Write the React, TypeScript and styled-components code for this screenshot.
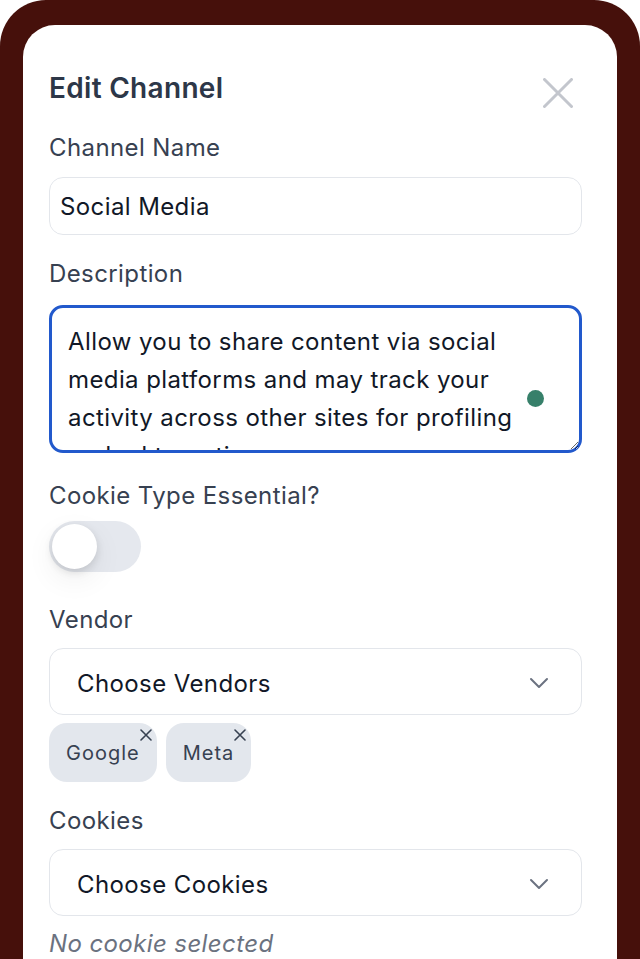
import React from "react";
import styled, { createGlobalStyle } from "styled-components";

const Global = createGlobalStyle`
  html, body { margin: 0; padding: 0; background: #ffffff; }
  body { font-family: Inter, "Noto Sans", sans-serif; -webkit-font-smoothing: antialiased; }
  * { box-sizing: border-box; }
`;

const Frame = styled.div`
  background: #46100b;
  border-radius: 46px 46px 0 0;
  padding: 25px 23px 0 23px;
  height: 959px;
  overflow: hidden;
`;

const Card = styled.div`
  background: #ffffff;
  border-radius: 32px 32px 0 0;
  padding: 46px 35px 0 26px;
  height: 100%;
  display: flex;
  flex-direction: column;
`;

const Header = styled.div`
  display: flex;
  align-items: center;
  justify-content: space-between;
  height: 34px;
`;

const Title = styled.h2`
  margin: 0;
  font-size: 28px;
  line-height: 34px;
  font-weight: 600;
  letter-spacing: 0.3px;
  color: #2d3748;
`;

const CloseButton = styled.button`
  border: none;
  background: none;
  padding: 0;
  width: 30px;
  height: 30px;
  margin-right: 9px;
  margin-top: 10px;
  display: flex;
  align-items: center;
  justify-content: center;
  cursor: pointer;
`;

const Label = styled.label<{ $mt: number }>`
  display: block;
  margin-top: ${(p) => p.$mt}px;
  padding-top: 1px;
  font-size: 24px;
  line-height: 27px;
  letter-spacing: 0.4px;
  color: #374151;
`;

const TextInput = styled.input`
  margin-top: 16px;
  width: 100%;
  height: 58px;
  border: 1.5px solid #e3e6eb;
  border-radius: 14px;
  padding: 1px 10px 0;
  font-family: inherit;
  font-size: 24px;
  letter-spacing: 0.4px;
  color: #111827;
  outline: none;
`;

const AreaWrap = styled.div`
  position: relative;
  margin-top: 18px;
`;

const TextArea = styled.textarea`
  display: block;
  width: 100%;
  height: 148px;
  border: 3px solid #2259cc;
  border-radius: 14px;
  padding: 15px 30px 0 16px;
  font-family: inherit;
  font-size: 24px;
  letter-spacing: 0.4px;
  line-height: 38px;
  color: #111827;
  outline: none;
  overflow: hidden;
`;

const Dot = styled.span`
  position: absolute;
  right: 38px;
  top: 85px;
  width: 17px;
  height: 17px;
  border-radius: 50%;
  background: #37806a;
`;

const Toggle = styled.div`
  margin-top: 12px;
  width: 92px;
  height: 51px;
  border-radius: 26px;
  background: #e5e8ee;
  padding: 3px;
  display: flex;
  align-items: center;
`;

const Knob = styled.span`
  width: 45px;
  height: 45px;
  border-radius: 50%;
  background: #ffffff;
  box-shadow: 0 3px 8px rgba(0, 0, 0, 0.12), 0 10px 30px rgba(0, 0, 0, 0.07);
`;

const Select = styled.div`
  margin-top: 15px;
  height: 67px;
  border: 1.5px solid #e3e6eb;
  border-radius: 14px;
  padding: 3px 32px 0 27px;
  display: flex;
  align-items: center;
  justify-content: space-between;
  font-size: 24px;
  letter-spacing: 0.4px;
  color: #111827;
`;

const Chips = styled.div`
  margin-top: 8px;
  display: flex;
  gap: 9px;
`;

const Chip = styled.span`
  position: relative;
  height: 59px;
  border-radius: 18px;
  background: #e3e7ed;
  padding: 1px 17px 0;
  display: flex;
  align-items: center;
  font-size: 20px;
  letter-spacing: 1px;
  color: #374151;
`;

const ChipClose = styled.span`
  position: absolute;
  top: 6px;
  right: 5px;
  width: 12px;
  height: 12px;
  display: flex;
`;

const Hint = styled.p`
  margin: 14px 0 0;
  font-size: 24px;
  line-height: 28px;
  letter-spacing: 0.4px;
  font-style: italic;
  color: #6b7280;
`;

const Chevron = () => (
  <svg width="20" height="12" viewBox="0 0 20 12" fill="none">
    <path d="M2 2l8 8 8-8" stroke="#6b7280" strokeWidth="2" strokeLinecap="round" strokeLinejoin="round" />
  </svg>
);

const SmallX = () => (
  <svg width="12" height="12" viewBox="0 0 12 12" fill="none">
    <path d="M1 1l10 10M11 1L1 11" stroke="#374151" strokeWidth="1.6" strokeLinecap="round" />
  </svg>
);

export default function App() {
  return (
    <>
      <Global />
      <Frame>
        <Card>
          <Header>
            <Title>Edit Channel</Title>
            <CloseButton aria-label="Close">
              <svg width="30" height="30" viewBox="0 0 30 30" fill="none">
                <path d="M1.5 1.5l27 27M28.5 1.5l-27 27" stroke="#c3c6cd" strokeWidth="3" strokeLinecap="round" />
              </svg>
            </CloseButton>
          </Header>

          <Label $mt={28}>Channel Name</Label>
          <TextInput defaultValue="Social Media" />

          <Label $mt={24}>Description</Label>
          <AreaWrap>
            <TextArea
              rows={4}
              defaultValue="Allow you to share content via social media platforms and may track your activity across other sites for profiling and ad targeting."
            />
            <Dot />
          </AreaWrap>

          <Label $mt={28}>Cookie Type Essential?</Label>
          <Toggle>
            <Knob />
          </Toggle>

          <Label $mt={33}>Vendor</Label>
          <Select>
            <span>Choose Vendors</span>
            <Chevron />
          </Select>
          <Chips>
            <Chip>
              Google
              <ChipClose>
                <SmallX />
              </ChipClose>
            </Chip>
            <Chip>
              Meta
              <ChipClose>
                <SmallX />
              </ChipClose>
            </Chip>
          </Chips>

          <Label $mt={24}>Cookies</Label>
          <Select>
            <span>Choose Cookies</span>
            <Chevron />
          </Select>
          <Hint>No cookie selected</Hint>
        </Card>
      </Frame>
    </>
  );
}
